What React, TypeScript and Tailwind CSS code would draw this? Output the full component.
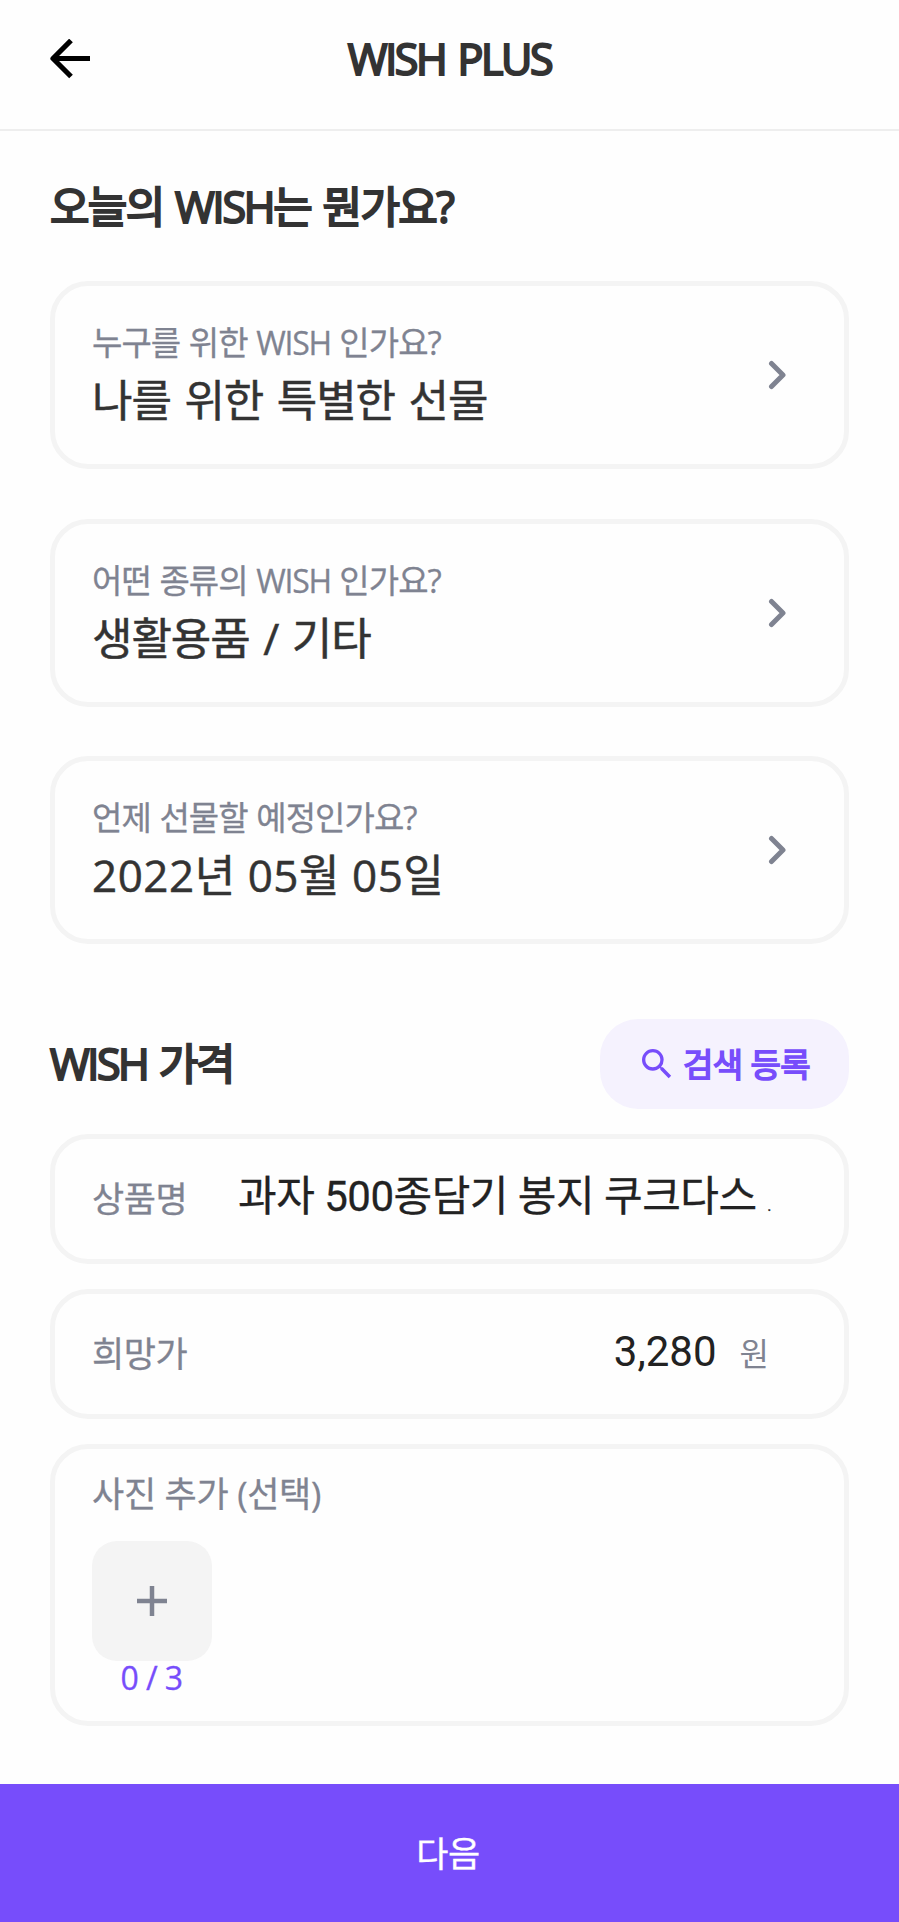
import type { ReactNode } from 'react';
import { MdSearch } from 'react-icons/md';

interface Question {
  label: ReactNode;
  value: ReactNode;
}

// Latin capitals and digits are sized and tracked separately from Hangul
function En({ children }: { children: string }) {
  return <span className="text-[32px] tracking-[-1.3px]">{children}</span>;
}

function Num({ children }: { children: string }) {
  return <span className="tracking-[0.5px]">{children}</span>;
}

const questions: Question[] = [
  {
    label: <>누구를 위한 <En>WISH</En> 인가요?</>,
    value: '나를 위한 특별한 선물',
  },
  {
    label: <>어떤 종류의 <En>WISH</En> 인가요?</>,
    value: '생활용품 / 기타',
  },
  {
    label: '언제 선물할 예정인가요?',
    value: <><Num>2022</Num>년 <Num>05</Num>월 <Num>05</Num>일</>,
  },
];

function QuestionCard({ label, value }: Question) {
  return (
    <button className="flex h-[188px] w-full items-center justify-between rounded-[38px] border-[5px] border-[#f4f4f4] pr-[57px] pl-[37px] text-left">
      <span className="flex flex-col">
        <span className="h-[48px] pt-px text-[33px] leading-[48px] tracking-[-0.95px] [word-spacing:1px] text-[#7f8391] [-webkit-text-stroke:0.3px_#7f8391]">{label}</span>
        <span className="h-[66px] pt-px text-[44px] leading-[66px] tracking-[-1.1px] [word-spacing:3.3px] text-[#333333] [-webkit-text-stroke:0.5px_#333333]">{value}</span>
      </span>
      <svg className="h-[30px] w-[20px]" viewBox="0 0 20 30" fill="none" stroke="#7f8391" strokeWidth="5" strokeLinecap="round" strokeLinejoin="round">
        <path d="M4.5 3.5 16 15 4.5 26.5" />
      </svg>
    </button>
  );
}

function Field({ label, children }: { label: string; children: ReactNode }) {
  return (
    <div className="flex h-[130px] items-center rounded-[38px] border-[5px] border-[#f4f4f4] pr-[73px] pl-[37px]">
      <span className="w-[146px] shrink-0 text-[35px] leading-[50px] tracking-[-0.4px] text-[#7f8391] [-webkit-text-stroke:0.3px_#7f8391]">{label}</span>
      {children}
    </div>
  );
}

export default function App() {
  return (
    <div className="flex h-[1922px] w-[899px] flex-col overflow-hidden bg-[#fefefe] font-['Open_Sans','Noto_Sans_CJK_KR',sans-serif] text-[#333333]">
      <header className="grid h-[131px] shrink-0 grid-cols-[100px_1fr_100px] items-center border-b-2 border-[#eeeeee] pb-[12px]">
        <svg className="ml-[50px] h-[40px] w-[40px]" viewBox="0 0 40 40" fill="none" stroke="#000" strokeWidth="5.2" strokeLinejoin="round">
          <path d="M40 19.5H4M21 1.5 3 19.5l18 18" />
        </svg>
        <h1 className="text-center text-[43px] leading-[60px] tracking-[-2.4px] [word-spacing:3.5px] [-webkit-text-stroke:2.1px_#333333]">WISH PLUS</h1>
      </header>

      <main className="flex flex-1 flex-col px-[50px]">
        <h2 className="mt-[43px] h-[66px] text-[43px] leading-[66px] tracking-[-1.7px] [word-spacing:2px] [-webkit-text-stroke:2.1px_#333333]">
          오늘의 <span className="tracking-[-2.2px]">WISH</span>는 뭔가요?
        </h2>
        <div className="mt-[41px] flex flex-col gap-[49.5px]">
          {questions.map((q, i) => (
            <QuestionCard key={i} {...q} />
          ))}
        </div>

        <div className="mt-[75px] flex h-[90px] items-center justify-between">
          <h2 className="text-[43px] leading-[66px] tracking-[-2.4px] [word-spacing:2.5px] [-webkit-text-stroke:2.1px_#333333]">WISH 가격</h2>
          <button className="flex h-[90px] w-[249px] items-center rounded-[38px] bg-[#f5f2fe] pl-[37px] text-[#774dfb]">
            <MdSearch className="h-[40px] w-[40px]" />
            <span className="ml-[6px] pt-px text-[33px] leading-[50px] tracking-[-0.6px] [-webkit-text-stroke:1.6px_#774dfb]">검색 등록</span>
          </button>
        </div>

        <div className="mt-[25px] flex flex-col gap-[25px]">
          <Field label="상품명">
            <span className="flex flex-1 items-baseline justify-between pt-[5px] pb-0 font-['Roboto','Noto_Sans_CJK_KR',sans-serif] text-[42px] leading-[60px] tracking-[-0.5px] whitespace-nowrap text-[#222222] [-webkit-text-stroke:0.3px_#222222]">
              과자 500종담기 봉지 쿠크다스<span className="text-[16px]">.</span>
            </span>
          </Field>
          <Field label="희망가">
            <span className="flex-1 pb-[5px] text-right font-['Roboto',sans-serif] text-[42px] leading-[60px] text-[#222222]">3,280</span>
            <span className="mr-[2px] ml-[23px] text-[32px] leading-[50px] text-[#7f8391]">원</span>
          </Field>
          <div className="flex h-[282px] flex-col items-start rounded-[38px] border-[5px] border-[#f4f4f4] pt-[20px] pl-[37px]">
            <span className="h-[50px] text-[35px] leading-[50px] tracking-[-0.3px] text-[#7f8391] [-webkit-text-stroke:0.3px_#7f8391]">사진 추가 (선택)</span>
            <button className="mt-[22px] flex h-[120px] w-[120px] items-center justify-center rounded-[25px] bg-[#f4f4f4]">
              <svg className="h-[30px] w-[30px]" viewBox="0 0 30 30" stroke="#7f8391" strokeWidth="4.5">
                <path d="M15 0v30M0 15h30" />
              </svg>
            </button>
            <span className="w-[119px] text-center text-[32px] leading-[34px] tracking-[-0.6px] text-[#774dfb] [-webkit-text-stroke:0.3px_#774dfb]">0 / 3</span>
          </div>
        </div>
      </main>

      <button className="flex h-[138px] shrink-0 items-center justify-center bg-[#774dfb] pt-px pr-[3px] text-[35px] leading-[50px] tracking-[-0.4px] text-white [-webkit-text-stroke:0.3px_#fff]">다음</button>
    </div>
  );
}
